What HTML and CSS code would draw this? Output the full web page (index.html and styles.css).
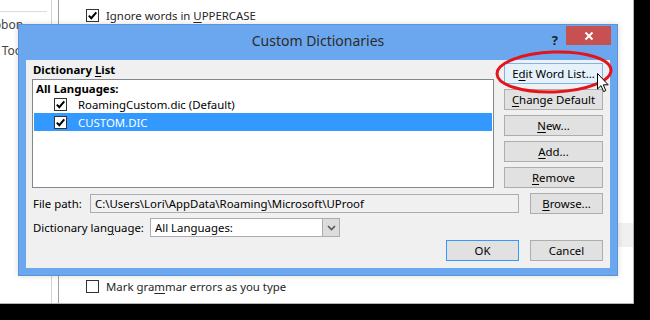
FILE: index.html
```html
<!DOCTYPE html>
<html lang="en">
<head>
    <meta charset="UTF-8">
    <title>Custom Dictionaries</title>
    <link rel="stylesheet" href="styles.css">
</head>
<body>
    <div class="screen">
        <!-- Word Options window behind the dialog -->
        <div class="options">
            <div class="nav">
                <div class="nav-rule"></div>
                <div class="nav-item">Customize Ribbon</div>
                <div class="nav-item nav-item-qat">Quick Access Toolbar</div>
            </div>
            <div class="pane">
                <div class="opt">
                    <span class="box"><svg viewBox="0 0 11 11"><path d="M1.8 5.6 L4.3 8.2 L9.3 2.4"/></svg></span>
                    <span>Ignore words in <u>U</u>PPERCASE</span>
                </div>
                <div class="pane-band"></div>
                <div class="opt">
                    <span class="box"></span>
                    <span>Mark gra<u>m</u>mar errors as you type</span>
                </div>
                <div class="opt opt-next">
                    <span class="box"></span>
                </div>
            </div>
        </div>

        <!-- Custom Dictionaries dialog -->
        <div class="dialog">
            <div class="titlebar">
                <span class="title">Custom Dictionaries</span>
                <span class="help">?</span>
                <span class="close"><svg viewBox="0 0 10 10"><path d="M1.5 1.5 L8.5 8.5 M8.5 1.5 L1.5 8.5"/></svg></span>
            </div>
            <div class="dialog-body">
                <div class="dict-area">
                    <div class="dict-left">
                        <div class="group-label">Dictionary <u>L</u>ist</div>
                        <div class="listbox">
                            <div class="list-head">All Languages:</div>
                            <div class="list-row">
                                <span class="box"><svg viewBox="0 0 11 11"><path d="M1.8 5.6 L4.3 8.2 L9.3 2.4"/></svg></span>
                                <span>RoamingCustom.dic (Default)</span>
                            </div>
                            <div class="list-row selected">
                                <span class="box"><svg viewBox="0 0 11 11"><path d="M1.8 5.6 L4.3 8.2 L9.3 2.4"/></svg></span>
                                <span>CUSTOM.DIC</span>
                            </div>
                        </div>
                    </div>
                    <div class="dict-buttons">
                        <button class="btn btn-hot">E<u>d</u>it Word List...</button>
                        <button class="btn"><u>C</u>hange Default</button>
                        <button class="btn"><u>N</u>ew...</button>
                        <button class="btn"><u>A</u>dd...</button>
                        <button class="btn"><u>R</u>emove</button>
                    </div>
                </div>

                <div class="field-row">
                    <span class="field-label">File path:</span>
                    <div class="path-box">C:\Users\Lori\AppData\Roaming\Microsoft\UProof</div>
                    <button class="btn btn-small"><u>B</u>rowse...</button>
                </div>

                <div class="field-row lang-row">
                    <span class="field-label lang-label">Dictionary lan<u>g</u>uage:</span>
                    <div class="combo">
                        <span class="combo-text">All Languages:</span>
                        <span class="combo-arrow"><svg viewBox="0 0 9 6"><path d="M1 1 L4.5 4.5 L8 1"/></svg></span>
                    </div>
                </div>

                <div class="actions">
                    <button class="btn btn-small btn-default">OK</button>
                    <button class="btn btn-small">Cancel</button>
                </div>
            </div>
        </div>

        <!-- red callout and mouse pointer drawn over the screenshot -->
        <svg class="callout" viewBox="0 0 120 46">
            <ellipse cx="60" cy="23" rx="57" ry="20" transform="rotate(-2 60 23)"/>
        </svg>
        <svg class="cursor" viewBox="0 0 13 20">
            <path d="M0.5 0.5 L0.5 16 L4 12.6 L6.6 18.6 L8.8 17.6 L6.3 11.8 L11.2 11.8 Z"/>
        </svg>
    </div>
</body>
</html>
```

FILE: styles.css
```css
body {
    margin: 0;
    background-color: #000;
    font-family: 'Noto Sans', 'Open Sans', sans-serif;
    font-size: 11.4px;
    color: #000;
}
u {
    text-decoration-thickness: 1px;
    text-underline-offset: 2px;
}
.screen {
    position: relative;
    width: 633px;
    height: 303px;
    background-color: #fff;
    border-right: 1px solid #b4b4b4;
    border-bottom: 1px solid #b4b4b4;
    overflow: hidden;
}

/* background window */
.options {
    display: flex;
    height: 100%;
}
.nav {
    width: 51px;
    flex: none;
    border-right: 1px solid #d4d4d4;
    overflow: hidden;
    color: #444;
    font-size: 12px;
}
.nav-rule {
    width: 47px;
    height: 1px;
    margin-top: 11px;
    background-color: #dcdcdc;
}
.nav-item {
    height: 26px;
    line-height: 26px;
    margin-left: -79px;
    white-space: nowrap;
}
.nav-item-qat {
    margin-left: -74px;
}
.pane {
    flex: 1;
    margin-left: 6px;
    border-left: 1px solid #a0a0a0;
    padding-top: 6px;
    color: #262626;
}
.opt {
    display: flex;
    align-items: center;
    gap: 7px;
    height: 19px;
    padding-left: 27px;
}
.pane-band {
    height: 24px;
    margin-top: 198px;
    margin-bottom: 30px;
    background-color: #f0f0f0;
}
.opt-next {
    margin-top: 6px;
}
.box {
    width: 11px;
    height: 11px;
    flex: none;
    border: 1px solid #333;
    background-color: #fff;
}
.box svg {
    display: block;
    width: 11px;
    height: 11px;
    fill: none;
    stroke: #000;
    stroke-width: 2;
}

/* dialog */
.dialog {
    position: absolute;
    left: 18px;
    top: 24px;
    width: 600px;
    height: 252px;
    box-sizing: border-box;
    padding: 0 7px 7px 7px;
    background-color: #6ba7ee;
    border: 1px solid #5a93d8;
    display: flex;
    flex-direction: column;
    box-shadow: 0 0 6px rgba(0, 0, 0, 0.15);
}
.titlebar {
    height: 35px;
    flex: none;
    display: flex;
    align-items: center;
    justify-content: center;
}
.title {
    font-size: 14px;
    color: #2b2b2b;
    padding-bottom: 5px;
}
.help {
    position: absolute;
    top: 6px;
    right: 59px;
    font-weight: bold;
    font-size: 13px;
    color: #222;
}
.close {
    position: absolute;
    top: 1px;
    right: 6px;
    width: 45px;
    height: 19px;
    background-color: #c75050;
    display: flex;
    align-items: center;
    justify-content: center;
}
.close svg {
    width: 10px;
    height: 10px;
    stroke: #fff;
    stroke-width: 2;
}
.dialog-body {
    flex: 1;
    background-color: #f0f0f0;
    padding: 3px 7px 0 6px;
}
.dict-area {
    display: flex;
    gap: 10px;
}
.dict-left {
    flex: 1;
}
.group-label {
    height: 16px;
    line-height: 14px;
    padding-left: 1px;
    font-weight: bold;
}
.listbox {
    height: 107px;
    border: 1px solid #828790;
    background-color: #fff;
}
.list-head {
    height: 16px;
    line-height: 17px;
    padding-left: 3px;
    font-weight: bold;
}
.list-row {
    display: flex;
    align-items: center;
    gap: 11px;
    height: 17px;
    margin: 0 1px;
    padding-left: 20px;
    white-space: nowrap;
}
.list-row.selected {
    height: 18px;
    background-color: #3399ff;
    color: #fff;
}
.dict-buttons {
    width: 99px;
    display: flex;
    flex-direction: column;
    gap: 5px;
}
.btn {
    height: 21px;
    padding: 0;
    border: 1px solid #adadad;
    background-color: #e1e1e1;
    font-family: inherit;
    font-size: 11.4px;
    color: #000;
    white-space: nowrap;
}
.btn-hot {
    background-color: #e5f1fb;
    border-color: #7eb4ea;
}
.btn-small {
    width: 73px;
    flex: none;
}
.btn-default {
    border-color: #3399ff;
}
.field-row {
    display: flex;
    align-items: center;
    height: 21px;
    margin-top: 5px;
}
.field-label {
    width: 58px;
    flex: none;
    padding-left: 1px;
    box-sizing: border-box;
}
.path-box {
    width: 429px;
    height: 19px;
    box-sizing: border-box;
    margin-right: 11px;
    padding-left: 4px;
    line-height: 17px;
    border: 1px solid #abadb3;
    background-color: #f0f0f0;
    white-space: nowrap;
    overflow: hidden;
}
.lang-row {
    height: 19px;
    margin-top: 4px;
}
.lang-label {
    width: 118px;
}
.combo {
    width: 190px;
    height: 19px;
    box-sizing: border-box;
    display: flex;
    border: 1px solid #abadb3;
    background-color: #fff;
}
.combo-text {
    flex: 1;
    padding-left: 4px;
    line-height: 17px;
}
.combo-arrow {
    width: 16px;
    border-left: 1px solid #acacac;
    background-color: #dcdcdc;
    display: flex;
    align-items: center;
    justify-content: center;
}
.combo-arrow svg {
    width: 9px;
    height: 6px;
    fill: none;
    stroke: #555;
    stroke-width: 1.6;
}
.actions {
    display: flex;
    justify-content: flex-end;
    gap: 11px;
    margin-top: 3px;
}

/* overlay */
.callout {
    position: absolute;
    left: 494px;
    top: 49px;
    width: 120px;
    height: 46px;
    fill: none;
    stroke: #e3141c;
    stroke-width: 3;
}
.cursor {
    position: absolute;
    left: 597px;
    top: 73px;
    width: 13px;
    height: 20px;
    fill: #fff;
    stroke: #000;
    stroke-width: 1;
}
```
